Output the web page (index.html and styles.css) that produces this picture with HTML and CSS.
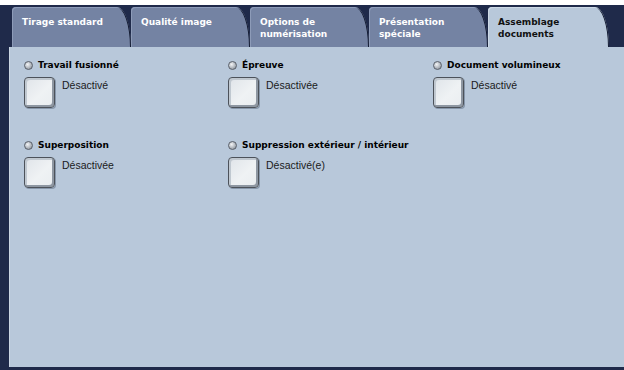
FILE: index.html
```html
<!DOCTYPE html>
<html lang="fr">
<head>
<meta charset="utf-8">
<title>Assemblage documents</title>
<link rel="stylesheet" href="styles.css">
</head>
<body>
<div class="screen">
  <div class="tabs">
    <div class="tab">Tirage standard</div>
    <div class="tab">Qualité image</div>
    <div class="tab">Options de<br>numérisation</div>
    <div class="tab">Présentation<br>spéciale</div>
    <div class="tab active">Assemblage<br>documents</div>
  </div>
  <div class="panel">
    <div class="item">
      <div class="label"><span class="radio"></span>Travail fusionné</div>
      <div class="control"><span class="btn"></span><span class="status">Désactivé</span></div>
    </div>
    <div class="item">
      <div class="label"><span class="radio"></span>Épreuve</div>
      <div class="control"><span class="btn"></span><span class="status">Désactivée</span></div>
    </div>
    <div class="item">
      <div class="label"><span class="radio"></span>Document volumineux</div>
      <div class="control"><span class="btn"></span><span class="status">Désactivé</span></div>
    </div>
    <div class="item">
      <div class="label"><span class="radio"></span>Superposition</div>
      <div class="control"><span class="btn"></span><span class="status">Désactivée</span></div>
    </div>
    <div class="item">
      <div class="label"><span class="radio"></span>Suppression extérieur / intérieur</div>
      <div class="control"><span class="btn"></span><span class="status">Désactivé(e)</span></div>
    </div>
  </div>
</div>
</body>
</html>
```

FILE: styles.css
```css
html, body {
  margin: 0;
  padding: 0;
  background: #ffffff;
}
body {
  width: 624px;
  height: 370px;
  overflow: hidden;
}
.screen {
  margin-top: 5px;
  height: 365px;
  box-sizing: border-box;
  background: #1f2a4a;
  padding: 2px 0 3px 9px;
  display: flex;
  flex-direction: column;
}
.tabs {
  display: flex;
  height: 40px;
  margin-left: 3px;
}
.tab {
  width: 119px;
  box-sizing: border-box;
  background: #7483a3;
  color: #ffffff;
  font-family: "DejaVu Sans", Verdana, sans-serif;
  font-weight: bold;
  font-size: 9px;
  line-height: 12px;
  padding: 9px 0 0 10px;
  border-top-left-radius: 4px;
  border-top-right-radius: 14px 40px;
  box-shadow: inset 1px 1px 0 #8d9bb8, inset -1px 0 0 #141c33;
}
.tab.active {
  background: #b8c8da;
  color: #111111;
  box-shadow: inset 1px 1px 0 #cdd9e6, inset -1px 0 0 #141c33;
  width: 121px;
}
.panel {
  height: 320px;
  box-sizing: border-box;
  background: #b8c8da;
  border-left: 1px solid #cbd7e4;
  padding: 11px 0 0 14px;
  display: grid;
  grid-template-columns: 204px 205px 1fr;
  grid-auto-rows: min-content;
  row-gap: 30px;
}
.item {
  display: flex;
  flex-direction: column;
  gap: 5px;
}
.label {
  display: flex;
  align-items: center;
  gap: 5px;
  height: 14px;
  font-family: "DejaVu Sans", Verdana, sans-serif;
  font-weight: bold;
  font-size: 9px;
  color: #000000;
  white-space: nowrap;
}
.radio {
  width: 9px;
  height: 9px;
  border-radius: 50%;
  box-sizing: border-box;
  border: 1px solid #5a606a;
  background: radial-gradient(circle at 38% 35%, #f4f5f6 0, #c3c8ce 40%, #7d848e 100%);
  flex: none;
}
.control {
  display: flex;
  align-items: flex-start;
  gap: 7px;
}
.btn {
  width: 31px;
  height: 31px;
  box-sizing: border-box;
  border: 1px solid #4c525a;
  border-radius: 4px;
  background: linear-gradient(135deg, #dfe4e9 0%, #eff2f4 55%, #e9edf0 100%);
  box-shadow: inset -2px -2px 0 #8e97a2, inset 2px 2px 0 #c0c8d0, 1px 1px 0 #8797ab;
  flex: none;
}
.status {
  margin-top: 2px;
  font-family: "Liberation Sans", Arial, sans-serif;
  font-size: 10.5px;
  line-height: 12px;
  color: #1a1a1a;
}
```
